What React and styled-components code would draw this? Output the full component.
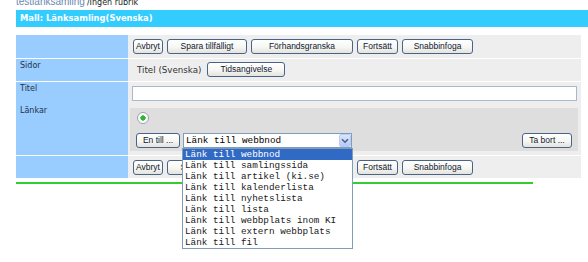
import React from "react";
import styled, { createGlobalStyle } from "styled-components";

const Global = createGlobalStyle`
  html, body { margin: 0; padding: 0; background: #ffffff; }
  body { font-family: "DejaVu Sans", Verdana, sans-serif; }
  *, *::before, *::after { box-sizing: border-box; }
`;

const Page = styled.div`
  position: relative;
  width: 588px;
  height: 262px;
  overflow: hidden;
`;

const Crumbs = styled.div`
  display: flex;
  align-items: baseline;
  height: 10px;
  margin-top: -3px;
  padding-left: 16px;
  line-height: 10px;
`;

const CrumbLink = styled.a`
  font-family: "Liberation Sans", Arial, sans-serif;
  font-size: 10px;
  color: #6a88b0;
  text-decoration: none;
`;

const CrumbRest = styled.span`
  margin-left: 2px;
  font-family: "DejaVu Sans", Verdana, sans-serif;
  font-size: 8px;
  color: #222222;
`;

const Header = styled.div`
  margin: 3px 0 0 16px;
  height: 17px;
  line-height: 17px;
  padding-left: 4px;
  background: #33ccff;
  color: #ffffff;
  font-family: "DejaVu Sans", Verdana, sans-serif;
  font-weight: bold;
  font-size: 8.4px;
`;

const Table = styled.div`
  margin: 8px 0 0 16px;
  width: 565px;
  display: flex;
  flex-direction: column;
`;

const Row = styled.div`
  display: grid;
  grid-template-columns: 112px 1fr;
  height: ${(p) => p.$h + (p.$sep ? 1 : 0)}px;
  border-bottom: ${(p) => (p.$sep ? "1px solid #ffffff" : "none")};
`;

const Label = styled.div`
  background: #99ccff;
  padding: 2px 0 0 4px;
  line-height: 10px;
  font-size: 8px;
  color: #23324a;
`;

const Cell = styled.div`
  background: #eeeeee;
  padding: ${(p) => p.$pad || "4px 0 0 5px"};
  display: flex;
  flex-direction: ${(p) => (p.$col ? "column" : "row")};
  align-items: ${(p) => (p.$col ? "stretch" : "flex-start")};
  gap: ${(p) => p.$gap ?? 4}px;
`;

const Btn = styled.button`
  width: ${(p) => p.$w}px;
  height: 15px;
  padding: 0;
  border: 1px solid #4a6488;
  border-radius: 3px;
  background: linear-gradient(#ffffff 0%, #f6f6f3 55%, #e4e3dc 100%);
  font-family: "Liberation Sans", Arial, sans-serif;
  font-size: 8.5px;
  line-height: 13px;
  color: #101830;
  text-align: center;
  white-space: nowrap;
  cursor: pointer;
`;

const FieldText = styled.span`
  font-size: 8.7px;
  color: #333333;
  line-height: 15px;
  margin: 1px 6px 0 4px;
`;

const Input = styled.input`
  width: 445px;
  height: 15px;
  margin: 0;
  border: 1px solid #a7b9cf;
  background: #ffffff;
  padding: 0 2px;
`;

const Panel = styled.div`
  margin: 0 3px 0 2px;
  background: #dedede;
  padding: 4px 6px 3px 6px;
  display: flex;
  flex-direction: column;
  gap: 9px;
`;

const Radio = styled.span`
  display: block;
  width: 12px;
  height: 12px;
  margin-left: 1px;
  border-radius: 50%;
  border: 1px solid #9aa5ae;
  background: radial-gradient(circle, #2fb52f 0 2.4px, #ffffff 2.9px);
`;

const Controls = styled.div`
  display: flex;
  align-items: center;
  gap: 3px;
  height: 15px;
`;

const Spacer = styled.div`
  flex: 1;
`;

const SelectBox = styled.div`
  position: relative;
  width: 169px;
  height: 15px;
  border: 1px solid #7f9db9;
  background: #ffffff;
  display: flex;
  align-items: center;
`;

const SelectText = styled.span`
  flex: 1;
  padding-left: 2px;
  font-family: "Liberation Mono", "Courier New", monospace;
  font-size: 9.33px;
  color: #000000;
  white-space: nowrap;
`;

const Arrow = styled.span`
  width: 12px;
  height: 13px;
  border: 1px solid #b8cbf2;
  border-radius: 2px;
  background: linear-gradient(#dbe6fd, #b5c9f5);
  display: flex;
  align-items: center;
  justify-content: center;
`;

const List = styled.ul`
  position: absolute;
  left: -2px;
  top: 14px;
  z-index: 5;
  width: 171px;
  margin: 0;
  padding: 0;
  list-style: none;
  border: 1px solid #7f9db9;
  background: #ffffff;
`;

const Item = styled.li`
  height: 11px;
  line-height: 11px;
  padding-left: 2px;
  font-family: "Liberation Mono", "Courier New", monospace;
  font-size: 9.33px;
  white-space: nowrap;
  color: ${(p) => (p.$on ? "#ffffff" : "#1a1a1a")};
  background: ${(p) => (p.$on ? "#316ac5" : "transparent")};
`;

const GreenLine = styled.div`
  margin: 4px 0 0 16px;
  width: 517px;
  height: 2px;
  background: #33cc33;
`;

const options = [
  "Länk till webbnod",
  "Länk till samlingssida",
  "Länk till artikel (ki.se)",
  "Länk till kalenderlista",
  "Länk till nyhetslista",
  "Länk till lista",
  "Länk till webbplats inom KI",
  "Länk till extern webbplats",
  "Länk till fil",
];

const ActionButtons = () => (
  <>
    <Btn $w={30}>Avbryt</Btn>
    <Btn $w={80}>Spara tillfälligt</Btn>
    <Btn $w={102}>Förhandsgranska</Btn>
    <Btn $w={41}>Fortsätt</Btn>
    <Btn $w={71}>Snabbinfoga</Btn>
  </>
);

export default function App() {
  return (
    <Page>
      <Global />
      <Crumbs>
        <CrumbLink href="#">testlänksamling</CrumbLink>
        <CrumbRest>/Ingen rubrik</CrumbRest>
      </Crumbs>
      <Header>Mall: Länksamling(Svenska)</Header>
      <Table>
        <Row $h={23} $sep>
          <Label />
          <Cell>
            <ActionButtons />
          </Cell>
        </Row>
        <Row $h={22} $sep>
          <Label>Sidor</Label>
          <Cell $pad="3px 0 0 5px" $gap={0}>
            <FieldText>Titel (Svenska)</FieldText>
            <Btn $w={78}>Tidsangivelse</Btn>
          </Cell>
        </Row>
        <Row $h={22}>
          <Label>Titel</Label>
          <Cell $pad="4px 0 0 4px">
            <Input type="text" />
          </Cell>
        </Row>
        <Row $h={51} $sep>
          <Label>Länkar</Label>
          <Cell $col $pad="4px 0 0 0" $gap={0}>
            <Panel>
              <Radio />
              <Controls>
                <Btn $w={44}>En till ...</Btn>
                <SelectBox>
                  <SelectText>Länk till webbnod</SelectText>
                  <Arrow>
                    <svg width="8" height="6" viewBox="0 0 8 6">
                      <path d="M1 1.2 L4 4.2 L7 1.2" fill="none" stroke="#4d6185" strokeWidth="1.6" />
                    </svg>
                  </Arrow>
                  <List>
                    {options.map((o, i) => (
                      <Item key={o} $on={i === 0}>{o}</Item>
                    ))}
                  </List>
                </SelectBox>
                <Spacer />
                <Btn $w={50}>Ta bort ...</Btn>
              </Controls>
            </Panel>
          </Cell>
        </Row>
        <Row $h={22}>
          <Label />
          <Cell>
            <ActionButtons />
          </Cell>
        </Row>
      </Table>
      <GreenLine />
    </Page>
  );
}
